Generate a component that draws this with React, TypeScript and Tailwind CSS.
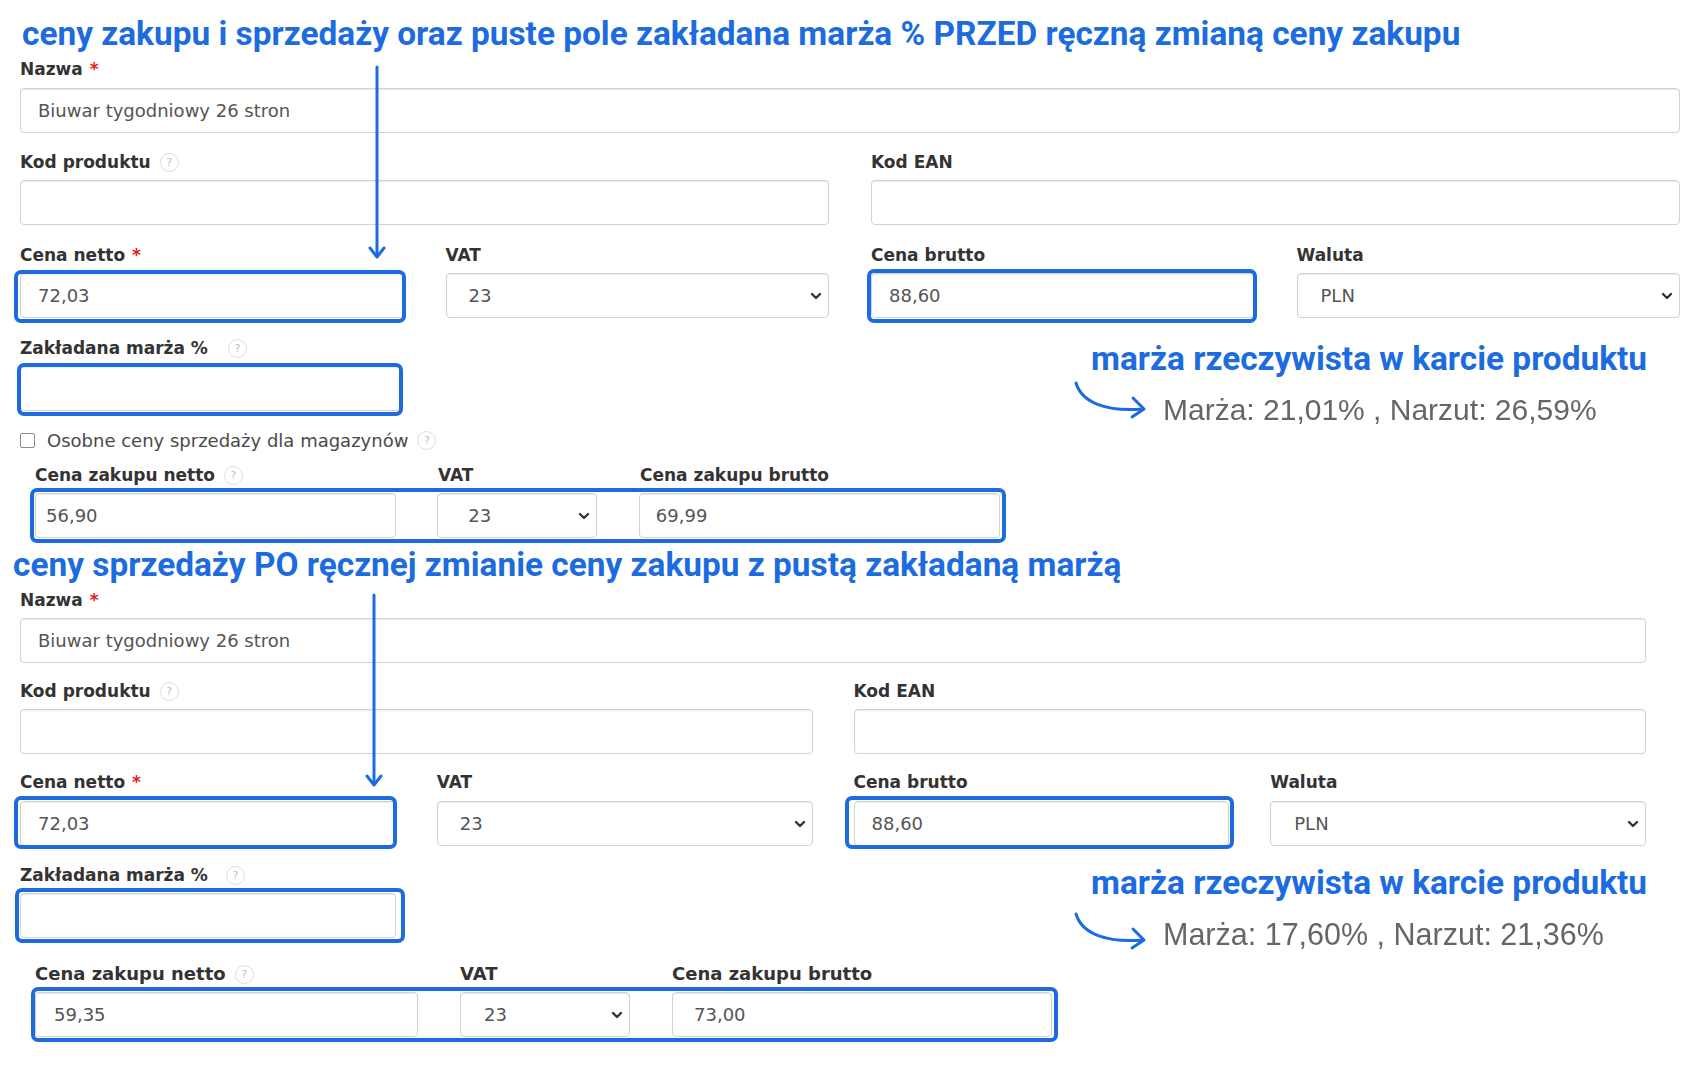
import React from "react";

type Kids = { children?: React.ReactNode };

function Help({ gap = "ml-[9px]" }: { gap?: string }) {
  return (
    <span
      className={`${gap} inline-flex h-[19px] w-[19px] shrink-0 items-center justify-center rounded-full border border-[#dedede] text-[11px] font-normal leading-none text-[#c0c0c0]`}
    >
      ?
    </span>
  );
}

function Label({
  text,
  req,
  help,
  helpGap,
  size = "text-[17px]",
}: {
  text: string;
  req?: boolean;
  help?: boolean;
  helpGap?: string;
  size?: string;
}) {
  return (
    <div className={`mb-[6px] flex h-[24px] items-center whitespace-nowrap font-bold leading-[24px] text-[#333] ${size}`}>
      <span>{text}</span>
      {req && <span className="ml-[7px] text-[#e2231a]">*</span>}
      {help && <Help gap={helpGap} />}
    </div>
  );
}

function TextBox({
  value = "",
  pad = "pl-[17px]",
  size = "text-[18px]",
}: {
  value?: string;
  pad?: string;
  size?: string;
}) {
  return (
    <div
      className={`flex h-[45px] w-full items-center whitespace-nowrap rounded-[4px] border border-[#d2d2d2] bg-white ${pad} ${size} text-[#555] shadow-[inset_0_1px_1px_rgba(0,0,0,0.08)]`}
    >
      {value}
    </div>
  );
}

function SelectBox({
  value,
  pad = "pl-[22px]",
  size = "text-[18px]",
}: {
  value: string;
  pad?: string;
  size?: string;
}) {
  return (
    <div
      className={`flex h-[45px] w-full items-center justify-between rounded-[4px] border border-[#d2d2d2] bg-white pr-[6px] ${pad} ${size} text-[#555] shadow-[inset_0_1px_1px_rgba(0,0,0,0.08)]`}
    >
      <span>{value}</span>
      <svg width="12" height="8" viewBox="0 0 12 8">
        <path d="M2 2l4 4 4-4" fill="none" stroke="#333" strokeWidth="2.4" strokeLinecap="round" strokeLinejoin="round" />
      </svg>
    </div>
  );
}

// Blue highlight frame drawn over a field
function Boxed({ children, inset }: Kids & { inset: string }) {
  return (
    <div className="relative">
      {children}
      <div className={`pointer-events-none absolute rounded-[7px] border-[4px] border-[#1c6ce0] ${inset}`} />
    </div>
  );
}

function DownArrow({ pos }: { pos: string }) {
  return (
    <svg className={`pointer-events-none absolute ${pos}`} width="20" height="197" viewBox="0 0 20 197">
      <path d="M10 3 V192" stroke="#1c6ce0" strokeWidth="3" strokeLinecap="round" fill="none" />
      <path d="M3 184 L10 193 L17 184" stroke="#1c6ce0" strokeWidth="3" fill="none" strokeLinecap="round" strokeLinejoin="round" />
    </svg>
  );
}

function Annotation({
  value,
  pad,
  arrowGap,
  size,
}: {
  value: string;
  pad: string;
  arrowGap: string;
  size: string;
}) {
  return (
    <div className={pad}>
      <div className="h-[40px] whitespace-nowrap pl-[18px] font-['Roboto',sans-serif] text-[33.4px] font-bold leading-[40px] text-[#1c6ce0]">
        marża rzeczywista w karcie produktu
      </div>
      <div className="flex items-start">
        <svg className={`shrink-0 ${arrowGap}`} width="80" height="45" viewBox="0 0 80 45">
          <path d="M3 4 C 9 24, 34 33, 70 30" fill="none" stroke="#1c6ce0" strokeWidth="3" strokeLinecap="round" />
          <path d="M60 19 L71 30 L59 38" fill="none" stroke="#1c6ce0" strokeWidth="3" strokeLinecap="round" strokeLinejoin="round" />
        </svg>
        <span
          className={`ml-[10px] mt-[14px] h-[34px] whitespace-nowrap font-['Liberation_Sans',Arial,sans-serif] ${size} leading-[34px] text-[#666] blur-[0.4px]`}
        >
          {value}
        </span>
      </div>
    </div>
  );
}

export default function App() {
  return (
    <div className="relative h-[1080px] w-[1699px] overflow-hidden bg-white font-['DejaVu_Sans',Verdana,sans-serif]">
      {/* Before editing the purchase price */}
      <div className="ml-[20px] w-[1660px] pt-[14px]">
        <h1 className="mb-[3px] ml-[2px] h-[40px] whitespace-nowrap font-['Roboto',sans-serif] text-[33.4px] font-bold leading-[40px] text-[#1c6ce0]">
          ceny zakupu i sprzedaży oraz puste pole zakładana marża % PRZED ręczną zmianą ceny zakupu
        </h1>

        <div className="mb-[17px]">
          <Label text="Nazwa" req />
          <div className="pt-[1px]">
            <TextBox value="Biuwar tygodniowy 26 stron" />
          </div>
        </div>

        <div className="mb-[18px] grid grid-cols-2 gap-x-[42px]">
          <div>
            <Label text="Kod produktu" help />
            <TextBox />
          </div>
          <div>
            <Label text="Kod EAN" />
            <TextBox />
          </div>
        </div>

        <div className="mb-[18px] grid grid-cols-4 gap-x-[42px]">
          <div>
            <Label text="Cena netto" req />
            <Boxed inset="left-[-6px] right-[-2px] top-[-3px] bottom-[-5px]">
              <TextBox value="72,03" />
            </Boxed>
          </div>
          <div>
            <Label text="VAT" />
            <SelectBox value="23" />
          </div>
          <div>
            <Label text="Cena brutto" />
            <Boxed inset="left-[-4px] right-[-2px] top-[-4px] bottom-[-5px]">
              <TextBox value="88,60" />
            </Boxed>
          </div>
          <div>
            <Label text="Waluta" />
            <SelectBox value="PLN" pad="pl-[23px]" />
          </div>
        </div>

        <div className="flex">
          <div className="w-[1053px] shrink-0">
            <div className="w-[383px]">
              <Label text="Zakładana marża %" help helpGap="ml-[20px]" />
              <Boxed inset="left-[-3px] right-[0px] top-[-3px] bottom-[-5px]">
                <TextBox />
              </Boxed>
            </div>

            <div className="mt-[17px] flex h-[24px] items-center whitespace-nowrap text-[18px] text-[#4a4a4a]">
              <span className="h-[15px] w-[15px] shrink-0 rounded-[2px] border border-[#8a8a8a] bg-white" />
              <span className="ml-[12px]">Osobne ceny sprzedaży dla magazynów</span>
              <Help />
            </div>

            <div className="mt-[11px] pl-[15px]">
              <div className="flex">
                <div className="mr-[41px] w-[362px]">
                  <Label text="Cena zakupu netto" help />
                </div>
                <div className="mr-[42px] w-[160px]">
                  <Label text="VAT" />
                </div>
                <div className="w-[362px]">
                  <Label text="Cena zakupu brutto" />
                </div>
              </div>
              <div className="w-[965px]">
                <Boxed inset="left-[-5px] right-[-6px] top-[-5px] bottom-[-5px]">
                  <div className="flex">
                    <div className="mr-[41px] w-[362px]">
                      <TextBox value="56,90" pad="pl-[10px]" />
                    </div>
                    <div className="mr-[42px] w-[160px]">
                      <SelectBox value="23" pad="pl-[30px]" />
                    </div>
                    <div className="w-[362px]">
                      <TextBox value="69,99" pad="pl-[16px]" />
                    </div>
                  </div>
                </Boxed>
              </div>
            </div>
          </div>

          <Annotation value="Marża: 21,01% , Narzut: 26,59%" pad="pt-[3px]" arrowGap="mt-[0px]" size="text-[30px]" />
        </div>
      </div>

      {/* After editing the purchase price, margin left empty */}
      <div className="ml-[20px] w-[1626px] pt-[7px]">
        <h1 className="mb-[3px] ml-[-7px] h-[40px] whitespace-nowrap font-['Roboto',sans-serif] text-[33.4px] font-bold leading-[40px] text-[#1c6ce0]">
          ceny sprzedaży PO ręcznej zmianie ceny zakupu z pustą zakładaną marżą
        </h1>

        <div className="mb-[16px]">
          <Label text="Nazwa" req />
          <TextBox value="Biuwar tygodniowy 26 stron" />
        </div>

        <div className="mb-[16px] grid grid-cols-2 gap-x-[41px]">
          <div>
            <Label text="Kod produktu" help />
            <TextBox />
          </div>
          <div>
            <Label text="Kod EAN" />
            <TextBox />
          </div>
        </div>

        <div className="mb-[17px] grid grid-cols-4 gap-x-[41px]">
          <div>
            <Label text="Cena netto" req />
            <div className="pt-[1px]">
              <Boxed inset="left-[-6px] right-[-1px] top-[-5px] bottom-[-3px]">
                <TextBox value="72,03" />
              </Boxed>
            </div>
          </div>
          <div>
            <Label text="VAT" />
            <div className="pt-[1px]">
              <SelectBox value="23" />
            </div>
          </div>
          <div>
            <Label text="Cena brutto" />
            <div className="pt-[1px]">
              <Boxed inset="left-[-9px] right-[-5px] top-[-5px] bottom-[-3px]">
                <TextBox value="88,60" />
              </Boxed>
            </div>
          </div>
          <div>
            <Label text="Waluta" />
            <div className="pt-[1px]">
              <SelectBox value="PLN" pad="pl-[23px]" />
            </div>
          </div>
        </div>

        <div className="flex">
          <div className="w-[1053px] shrink-0">
            <div className="w-[376px]">
              <Label text="Zakładana marża %" help helpGap="ml-[18px]" />
              <Boxed inset="left-[-5px] right-[-9px] top-[-5px] bottom-[-5px]">
                <TextBox />
              </Boxed>
            </div>

            <div className="mt-[24px] pl-[15px]">
              <div className="flex">
                <div className="mr-[42px] w-[383px]">
                  <Label text="Cena zakupu netto" help size="text-[18px]" />
                </div>
                <div className="mr-[42px] w-[170px]">
                  <Label text="VAT" size="text-[18px]" />
                </div>
                <div className="w-[380px]">
                  <Label text="Cena zakupu brutto" size="text-[18px]" />
                </div>
              </div>
              <div className="w-[1017px]">
                <Boxed inset="left-[-4px] right-[-6px] top-[-5px] bottom-[-5px]">
                  <div className="flex">
                    <div className="mr-[42px] w-[383px]">
                      <TextBox value="59,35" pad="pl-[18px]" />
                    </div>
                    <div className="mr-[42px] w-[170px]">
                      <SelectBox value="23" pad="pl-[23px]" />
                    </div>
                    <div className="w-[380px]">
                      <TextBox value="73,00" pad="pl-[21px]" />
                    </div>
                  </div>
                </Boxed>
              </div>
            </div>
          </div>

          <Annotation value="Marża: 17,60% , Narzut: 21,36%" pad="pt-[0px]" arrowGap="mt-[7px]" size="text-[30.5px]" />
        </div>
      </div>

      <DownArrow pos="left-[367px] top-[64px]" />
      <DownArrow pos="left-[364px] top-[592px]" />
    </div>
  );
}
